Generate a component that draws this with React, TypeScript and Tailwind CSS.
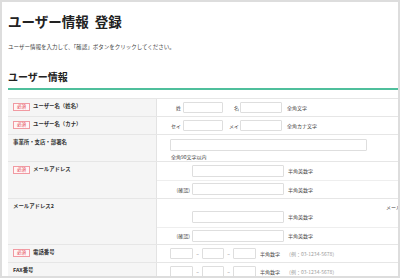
import React from 'react';

const font = { fontFamily: '"Noto Sans CJK JP", "Noto Sans", sans-serif' };

function Badge() {
  return (
    <span className="flex items-center justify-center w-[17px] h-[8px] border border-[#f19aa2] bg-[#fff5f6] text-[#e0404c] text-[4.5px] leading-none mr-[3px] shrink-0">
      必須
    </span>
  );
}

function Input({ w, h = 'h-[11px]' }: { w: string; h?: string }) {
  return <span className={`block ${w} ${h} bg-white border border-[#dedede] rounded-[1px] shrink-0`} />;
}

function Label({ text, req }: { text: string; req?: boolean }) {
  return (
    <div className="w-[149px] shrink-0 bg-[#f5f5f5] border-r border-[#e3e3e3] pl-[5px] pt-[4px] flex items-start">
      <div className="flex items-center h-[8px]">
        {req && <Badge />}
        <span className="text-[5.4px] font-bold text-[#333] leading-none">{text}</span>
      </div>
    </div>
  );
}

function Note({ children, gray, ml }: { children: React.ReactNode; gray?: boolean; ml?: string }) {
  return (
    <span className={`block text-[5px] leading-none whitespace-nowrap ${ml ?? ''} ${gray ? 'text-[#9a9a9a]' : 'text-[#444]'}`}>
      {children}
    </span>
  );
}

function Phone() {
  return (
    <div className="flex items-center h-full pl-[13px]">
      <Input w="w-[23px]" />
      <span className="block w-[9px] text-center text-[5px] text-[#666]">–</span>
      <Input w="w-[22px]" />
      <span className="block w-[9px] text-center text-[5px] text-[#666]">–</span>
      <Input w="w-[23px]" />
      <Note ml="ml-[4px]">半角数字</Note>
      <Note ml="ml-[6px]" gray>（例：03-1234-5678）</Note>
    </div>
  );
}

function MailLine({ confirm }: { confirm?: boolean }) {
  return (
    <div className="flex items-center pl-[13px]">
      <span className="block w-[20px] text-right text-[5px] text-[#444]">{confirm ? '(確認)' : ''}</span>
      <span className="block ml-[2px]"><Input w="w-[92px]" h="h-[12px]" /></span>
      <Note ml="ml-[4px]">半角英数字</Note>
    </div>
  );
}

function NameField({ a, b, note }: { a: string; b: string; note: string }) {
  return (
    <div className="flex items-center pl-[10px]">
      <span className="block w-[14px] text-right text-[5px] text-[#444]">{a}</span>
      <span className="block ml-[2px]"><Input w="w-[40px]" /></span>
      <span className="block w-[16px] text-right text-[5px] text-[#444]">{b}</span>
      <span className="block ml-[1px]"><Input w="w-[42px]" /></span>
      <Note ml="ml-[5px]">{note}</Note>
    </div>
  );
}

export default function App() {
  return (
    <div style={font} className="w-[400px] h-[278px] border-2 border-[#dddddd] bg-white overflow-hidden text-[#222] text-[5px] leading-none">
      <div className="pl-[6px] w-[420px]">
        <h1 className="pt-[9px] text-[13.5px] leading-[20px] font-bold text-[#222]">
          ユーザー情報<span className="ml-[6px]">登録</span>
        </h1>
        <p className="mt-[12px] text-[5.5px] leading-[8px] text-[#444]">
          ユーザー情報を入力して、「確認」ボタンをクリックしてください。
        </p>
        <h2 className="mt-[19px] text-[10px] leading-[14px] font-bold text-[#222]">ユーザー情報</h2>
        <div className="mt-[4px] h-[1.5px] bg-[#4fbf9c]" />

        <div className="mt-[8px] border-t border-[#e6e6e6]">
          {/* 姓名 */}
          <div className="flex h-[18px] border-b border-[#e6e6e6]">
            <Label text="ユーザー名（姓名）" req />
            <NameField a="姓" b="名" note="全角文字" />
          </div>
          {/* カナ */}
          <div className="flex h-[18px] border-b border-[#e6e6e6]">
            <Label text="ユーザー名（カナ）" req />
            <NameField a="セイ" b="メイ" note="全角カナ文字" />
          </div>
          {/* 事業所 */}
          <div className="flex h-[27px] border-b border-[#e6e6e6]">
            <Label text="事業所・支店・部署名" />
            <div className="flex flex-col pl-[13px] pt-[4px]">
              <Input w="w-[197px]" h="h-[12px]" />
              <Note ml="mt-[3px] ml-[1px]">全角90文字以内</Note>
            </div>
          </div>
          {/* メール */}
          <div className="flex h-[37px] border-b border-[#e6e6e6]">
            <Label text="メールアドレス" req />
            <div className="flex-1 flex flex-col">
              <div className="h-[19px] flex items-center border-b border-[#eeeeee]">
                <MailLine />
              </div>
              <div className="flex-1 flex items-center">
                <MailLine confirm />
              </div>
            </div>
          </div>
          {/* メール2 */}
          <div className="flex h-[46px] border-b border-[#e6e6e6]">
            <Label text="メールアドレス2" />
            <div className="flex-1 flex flex-col">
              <div className="h-[29px] flex flex-col border-b border-[#eeeeee]">
                <div className="pl-[229px] pt-[5px] h-[12px]">
                  <Note>メールアドレス</Note>
                </div>
                <MailLine />
              </div>
              <div className="flex-1 flex items-center">
                <MailLine confirm />
              </div>
            </div>
          </div>
          {/* 電話 */}
          <div className="flex h-[18px] border-b border-[#e6e6e6]">
            <Label text="電話番号" req />
            <Phone />
          </div>
          {/* FAX */}
          <div className="flex h-[18px] border-b border-[#e6e6e6]">
            <Label text="FAX番号" />
            <Phone />
          </div>
        </div>
      </div>
    </div>
  );
}
